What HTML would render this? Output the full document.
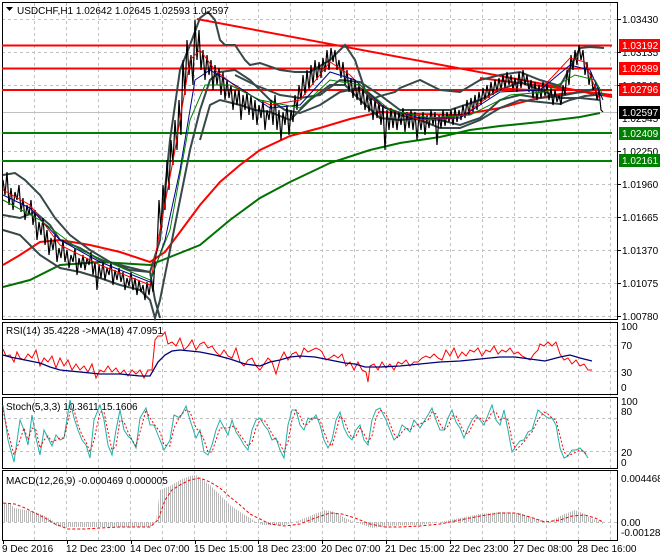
<!DOCTYPE html>
<html><head><meta charset="utf-8"><style>
html,body{margin:0;padding:0;background:#fff;}
svg{display:block;font-family:"Liberation Sans",sans-serif;font-size:10px;}
</style></head><body>
<svg width="660" height="560" viewBox="0 0 660 560" xmlns="http://www.w3.org/2000/svg">
<defs>
<pattern id="hist" width="2" height="4" patternUnits="userSpaceOnUse"><rect x="0" y="0" width="1" height="4" fill="#b8b8b8"/></pattern>
</defs>
<rect width="660" height="560" fill="#fff"/>
<!-- vertical grid -->
<g stroke="#c0c0c0" stroke-dasharray="3,3" stroke-width="1">
<path d="M34.5 3V540M66.5 3V540M98.5 3V540M130.5 3V540M162.5 3V540M194.5 3V540M226.5 3V540M258.5 3V540M290.5 3V540M322.5 3V540M354.5 3V540M386.5 3V540M418.5 3V540M450.5 3V540M482.5 3V540M514.5 3V540M546.5 3V540M578.5 3V540M610.5 3V540"/>
<!-- horizontal grid main -->
<path d="M2 19.5H617M2 52.5H617M2 85.5H617M2 151.5H617M2 184.5H617M2 217.5H617M2 250.5H617M2 283.5H617M2 316.5H617"/>
<path d="M2 345.5H617M2 371.5H617M2 418.5H617M2 451.5H617M2 522.5H617"/>
</g>
<path d="M2 112.5H617" stroke="#c0c0c0"/>
<!-- panel borders -->
<g fill="none" stroke="#000" stroke-width="1">
<rect x="2.5" y="2.5" width="615" height="317"/>
<rect x="2.5" y="322.5" width="615" height="72"/>
<rect x="2.5" y="397.5" width="615" height="71"/>
<rect x="2.5" y="470.5" width="615" height="70"/>
</g>
<!-- horizontal level lines -->
<g stroke-width="2">
<path d="M2 45.5H612" stroke="#f00"/>
<path d="M2 68.5H612" stroke="#f00"/>
<path d="M2 90H612" stroke="#f00"/>
<path d="M2 133H612" stroke="#008000"/>
<path d="M2 161H612" stroke="#008000"/>
<path d="M197 19L612 97" stroke="#f00"/>
<path d="M480 78L612 95" stroke="#f00"/>
</g>
<!-- green 200 MA -->
<polyline fill="none" stroke="#007000" stroke-width="2" points="3,287 30,280 60,265 100,262 150,265 175,255 200,245 230,220 260,198 290,182 330,163 370,150 400,143 440,137 470,130 500,126 540,122 580,117 600,113"/>
<!-- red MA -->
<polyline fill="none" stroke="#f00" stroke-width="2" points="3,265 20,255 40,242 60,240 90,245 120,252 150,262 165,252 180,232 200,205 220,182 240,165 260,150 290,136 320,128 350,119 380,112 420,114 460,115 500,108 530,100 560,94 585,92 600,96"/>
<!-- bollinger bands -->
<g fill="none" stroke="#364848" stroke-width="2">
<polyline points="3,175 15,173 25,180 40,195 55,218 70,235 90,250 110,262 130,270 150,272 160,240 170,140 180,70 190,45 200,18 208,12 215,20 220,40 225,45 235,45 245,60 250,65 260,63 280,70 295,72 310,72 330,60 340,50 345,45 355,60 365,90 370,100 380,96 395,92 400,88 420,80 440,90 460,92 480,80 500,75 520,72 540,80 560,86 570,68 580,48 590,47 604,48"/>
<polyline points="3,230 20,235 40,255 60,268 80,272 100,278 120,285 140,290 150,300 155,318 160,300 170,250 180,200 190,150 200,110 210,80 220,72 235,70 250,80 270,100 285,110 300,113 320,105 340,92 360,88 380,105 400,115 420,120 440,128 460,128 480,120 500,108 520,100 540,102 560,104 570,100 585,96 595,95 603,95"/>
<polyline points="3,215 20,218 35,212 50,225 60,240 80,248 100,260 120,265 140,270 150,272 155,300 160,318"/>
<polyline points="200,140 210,105 220,100 240,105 255,110 270,112 290,120 310,100 330,85 345,85 360,100 380,118 400,120 420,118 440,120 460,125 480,118 500,100 520,95 540,98 560,96 580,92 600,88"/>
<polyline points="235,75 255,85 280,95 300,98 320,95 340,80 360,82 380,95 400,110 430,110 450,110 480,100 500,90 520,82 540,90 560,98 580,98 600,100"/>
</g>
<!-- candles approximation -->
<polyline fill="none" stroke="#000" stroke-width="1.2" points="3,180 5,195 7,172 9,205 11,188 13,210 15,192 17,200 19,185 21,212 23,198 25,220 27,205 29,215 31,200 33,225 35,210 37,240 39,222 41,235 43,218 45,245 47,230 49,255 51,238 53,250 55,235 57,262 59,248 61,258 63,240 65,262 67,250 69,268 71,255 73,262 75,248 77,275 79,258 81,268 83,255 85,270 87,258 89,265 91,252 93,275 95,262 97,290 99,265 101,278 103,262 105,280 107,268 109,275 111,262 113,285 115,270 117,280 119,268 121,282 123,272 125,290 127,278 129,286 131,272 133,290 135,278 137,295 139,280 141,292 143,285 145,300 147,282 149,295 151,280 153,292 155,260 157,250 159,200 161,230 163,185 165,210 167,160 169,190 171,140 173,165 175,120 177,150 179,100 181,135 183,60 185,95 187,40 189,75 191,55 193,85 195,20 197,60 199,30 201,70 203,50 205,80 207,55 209,75 211,60 213,90 215,65 217,85 219,68 221,95 223,72 225,100 227,80 229,98 231,85 233,110 235,90 237,105 239,88 241,120 243,95 245,110 247,92 249,115 251,95 253,120 255,100 257,125 259,105 261,118 263,100 265,130 267,110 269,120 271,100 273,125 275,95 277,130 279,110 281,140 283,112 285,125 287,105 289,135 291,110 293,122 295,95 297,110 299,85 301,100 303,75 305,95 307,70 309,90 311,65 313,85 315,60 317,80 319,62 321,78 323,58 325,72 327,50 329,70 331,48 333,62 335,50 337,70 339,60 341,78 343,62 345,85 347,70 349,92 351,78 353,98 355,80 357,100 359,85 361,105 363,88 365,110 367,95 369,112 371,98 373,120 375,100 377,118 379,102 381,125 383,105 385,150 387,110 389,130 391,108 393,128 395,110 397,130 399,112 401,125 403,108 405,132 407,112 409,128 411,110 413,130 415,112 417,140 419,115 421,130 423,112 425,135 427,115 429,128 431,110 433,125 435,112 437,145 439,115 441,128 443,110 445,126 447,112 449,122 451,110 453,125 455,108 457,122 459,110 461,120 463,105 465,118 467,100 469,115 471,98 473,112 475,95 477,110 479,92 481,105 483,88 485,100 487,85 489,98 491,82 493,95 495,80 497,92 499,78 501,90 503,75 505,88 507,72 509,85 511,75 513,90 515,78 517,92 519,72 521,88 523,70 525,85 527,75 529,92 531,80 533,98 535,82 537,100 539,85 541,98 543,82 545,96 547,85 549,100 551,88 553,105 555,90 557,102 559,95 561,105 563,85 565,95 567,70 569,85 571,55 573,70 575,50 577,65 579,45 581,60 583,50 585,75 587,62 589,85 591,72 593,90 595,85 597,100 599,90 601,110 603,112"/>
<!-- thin fast MAs -->
<polyline fill="none" stroke="#f00" stroke-width="1" points="3,190 30,205 60,245 100,265 150,285 160,230 175,150 190,60 200,50 215,70 240,90 270,105 300,100 330,62 350,75 380,105 420,120 460,118 500,88 540,90 570,58 585,62 600,100"/>
<polyline fill="none" stroke="#00008b" stroke-width="1" points="3,195 30,208 60,240 100,262 150,282 165,240 180,170 195,80 210,70 240,88 270,108 300,105 330,72 355,80 385,108 420,118 460,118 500,92 540,90 570,65 590,70 603,100"/>
<polyline fill="none" stroke="#008000" stroke-width="1" points="3,200 40,220 80,250 150,280 170,230 190,120 205,85 230,85 260,100 300,108 330,80 360,85 390,110 430,118 470,115 510,95 545,92 575,75 595,80 603,95"/>
<!-- right price labels -->
<g fill="#000">
<text x="622" y="23">1.03430</text>
<text x="622" y="56">1.03135</text>
<text x="622" y="89">1.02840</text>
<text x="622" y="122">1.02545</text>
<text x="622" y="155">1.02250</text>
<text x="622" y="188">1.01960</text>
<text x="622" y="221">1.01665</text>
<text x="622" y="254">1.01370</text>
<text x="622" y="287">1.01075</text>
<text x="622" y="320">1.00780</text>
</g>
<g>
<rect x="619" y="39" width="41" height="13" fill="#f00"/><text x="622" y="49" fill="#fff">1.03192</text>
<rect x="619" y="62" width="41" height="13" fill="#f00"/><text x="622" y="72" fill="#fff">1.02989</text>
<rect x="619" y="83" width="41" height="13" fill="#f00"/><text x="622" y="93" fill="#fff">1.02796</text>
<rect x="619" y="106" width="41" height="13" fill="#000"/><text x="622" y="116" fill="#fff">1.02597</text>
<rect x="619" y="127" width="41" height="13" fill="#008000"/><text x="622" y="137" fill="#fff">1.02409</text>
<rect x="619" y="154" width="41" height="13" fill="#008000"/><text x="622" y="164" fill="#fff">1.02161</text>
</g>
<path d="M618 19.5h3M618 52.5h3M618 85.5h3M618 151.5h3M618 184.5h3M618 217.5h3M618 250.5h3M618 283.5h3M618 316.5h3" stroke="#000"/>
<!-- header -->
<path d="M6 7h7l-3.5 4z" fill="#000"/>
<text x="17" y="14" fill="#000">USDCHF,H1  1.02642 1.02645 1.02593 1.02597</text>
<!-- RSI -->
<text x="6" y="334">RSI(14) 35.4228  -&gt;MA(18) 47.0951</text>
<polyline fill="none" stroke="#f00" stroke-width="1" points="3,349 6,356 10,355 14,362 17,352 20,358 24,360 28,354 32,358 36,350 40,366 44,358 48,362 52,356 56,368 60,358 64,366 68,360 72,370 76,364 80,370 84,366 88,372 92,364 96,378 100,370 104,372 108,366 112,372 116,368 120,374 124,370 128,376 132,370 136,374 140,370 144,378 148,370 152,370 155,340 158,336 162,336 165,332 168,344 172,342 176,346 180,338 184,350 188,346 192,340 196,350 200,344 204,342 208,348 212,346 216,352 220,356 224,350 228,356 232,358 236,348 240,362 244,366 248,360 252,358 256,366 260,370 264,364 268,358 272,362 276,374 280,360 284,352 288,360 292,354 296,352 300,358 304,348 308,352 312,350 316,348 320,350 322,352 326,360 330,358 334,355 338,358 342,354 346,366 350,362 354,370 358,362 362,370 366,372 368,382 370,366 374,364 378,370 382,362 386,368 390,364 394,370 398,362 402,364 406,360 410,366 414,362 418,362 422,358 426,356 430,358 434,354 438,358 442,360 446,350 450,356 454,348 458,358 462,352 466,356 470,350 474,352 478,348 482,356 486,350 490,352 494,346 498,354 502,350 506,352 510,348 514,354 518,352 522,356 526,358 530,360 534,354 538,350 540,344 544,346 548,342 552,346 556,342 560,354 564,360 568,358 572,364 576,360 580,366 584,364 588,370 592,370"/>
<polyline fill="none" stroke="#00007a" stroke-width="1.3" points="3,355 10,357 20,359 30,361 40,363 50,367 60,370 80,372 100,374 120,374 140,376 150,376 158,362 165,355 172,351 180,350 190,351 200,352 215,355 230,359 245,364 260,366 270,362 280,360 290,357 300,356 315,357 330,360 345,363 355,364 365,367 380,367 400,366 420,364 440,362 460,361 480,359 500,357 515,357 530,359 545,361 560,357 570,355 580,358 592,361"/>
<!-- Stoch -->
<text x="6" y="410">Stoch(5,3,3) 10.3611 15.1606</text>
<polyline fill="none" stroke="#20b0a8" stroke-width="1" points="3,405 8,440 14,462 20,420 24,430 28,445 32,415 36,438 40,455 44,430 48,438 52,446 56,435 60,440 64,438 70,400 74,418 78,430 82,440 86,445 90,458 94,420 100,405 104,420 108,445 112,455 116,430 120,410 124,430 128,436 132,440 136,448 140,418 146,408 150,425 154,425 160,440 164,450 170,440 174,415 180,418 186,406 190,420 196,438 200,430 204,452 208,455 212,445 216,430 220,420 228,435 232,420 236,432 240,438 244,445 248,450 252,430 256,420 260,418 264,425 268,430 272,440 276,438 280,450 284,458 288,425 292,410 296,410 300,425 304,430 308,418 312,420 316,415 320,425 324,440 328,448 332,440 336,420 340,412 344,428 348,436 352,440 356,430 360,425 364,440 368,445 372,420 376,410 380,408 386,420 390,430 394,440 398,436 402,425 406,428 410,432 414,420 420,428 428,415 432,408 436,420 440,430 444,430 448,418 452,410 456,422 460,428 464,438 468,428 472,420 476,415 480,420 484,425 488,415 492,405 496,420 500,425 504,410 508,430 512,452 516,446 520,441 524,440 528,432 532,430 538,410 544,415 548,418 552,418 556,425 560,448 564,458 568,456 572,450 576,450 580,448 584,452 588,458"/>
<polyline fill="none" stroke="#f00" stroke-width="1" stroke-dasharray="2,2" points="3,410 8,432 14,455 20,440 24,428 28,440 32,428 36,430 40,448 44,440 48,436 52,442 56,440 60,438 64,438 70,412 74,410 78,425 82,435 86,442 90,452 94,440 100,412 104,412 108,432 112,450 116,446 120,420 124,422 128,432 132,440 136,446 140,432 146,410 150,418 154,424 160,432 164,445 170,446 174,428 180,416 186,410 190,412 196,428 200,432 204,440 208,452 212,452 216,440 220,428 228,428 232,426 236,428 240,435 244,440 248,446 252,442 256,428 260,420 264,420 268,426 272,434 276,440 280,444 284,452 288,442 292,420 296,410 300,416 304,425 308,424 312,418 316,418 320,420 324,432 328,442 332,446 336,432 340,416 344,420 348,430 352,438 356,436 360,428 364,434 368,442 372,436 376,418 380,410 386,414 390,424 394,434 398,438 402,432 406,428 410,430 414,426 420,424 428,420 432,412 436,414 440,424 444,430 448,426 452,416 456,416 460,424 464,432 468,434 472,426 476,418 480,418 484,422 488,420 492,412 496,412 500,420 504,418 508,420 512,440 516,450 520,446 524,442 528,436 532,432 538,420 544,412 548,414 552,418 556,420 560,436 564,452 568,456 572,454 576,452 580,450 584,452 588,455"/>
<!-- MACD -->
<text x="6" y="484">MACD(12,26,9) -0.000469 0.000005</text>
<polygon fill="url(#hist)" points="3,522 3,503 10,503 14,508 25,510 35,512 45,516 52,520 56,526 62,527 150,527 156,522 160,490 170,486 180,480 190,476 196,475 200,478 210,485 220,495 230,505 240,512 250,518 256,522 262,525 285,525 300,520 315,514 325,510 335,512 345,518 355,522 372,528 385,526 420,525 440,522 460,518 480,514 500,512 520,513 530,517 540,520 550,522 560,516 570,512 575,510 585,514 590,518 600,521 603,524 603,522"/>
<polyline fill="none" stroke="#f00" stroke-width="1" stroke-dasharray="3,2" points="3,503 15,504 25,508 35,513 45,518 55,524 68,529 85,529 100,528 120,527 150,527 158,520 165,500 172,490 180,485 190,480 200,478 210,482 220,488 230,497 240,505 250,514 260,519 270,524 285,526 300,524 315,518 330,513 342,514 355,518 370,524 385,527 400,527 420,526 440,524 460,520 480,516 500,513 515,513 530,517 545,522 560,520 572,516 585,515 595,518 603,522"/>
<!-- sub axes labels -->
<g fill="#000">
<text x="621" y="330">100</text><text x="621" y="349">70</text><text x="621" y="376">30</text><text x="621" y="391">0</text>
<text x="621" y="405">100</text><text x="621" y="415">80</text><text x="621" y="456">20</text><text x="621" y="466">0</text>
<text x="621" y="482">0.004468</text><text x="621" y="526">0.00</text><text x="621" y="536">-0.001284</text>
</g>
<!-- date axis -->
<path d="M3.5 541v3M67.5 541v3M131.5 541v3M195.5 541v3M258.5 541v3M322.5 541v3M386.5 541v3M450.5 541v3M514.5 541v3M578.5 541v3" stroke="#000"/>
<g fill="#000">
<text x="2" y="552">9 Dec 2016</text><text x="66" y="552">12 Dec 23:00</text><text x="130" y="552">14 Dec 07:00</text><text x="194" y="552">15 Dec 15:00</text><text x="257" y="552">18 Dec 23:00</text><text x="321" y="552">20 Dec 07:00</text><text x="385" y="552">21 Dec 15:00</text><text x="449" y="552">22 Dec 23:00</text><text x="513" y="552">27 Dec 08:00</text><text x="577" y="552">28 Dec 16:00</text>
</g>
</svg>
</body></html>
